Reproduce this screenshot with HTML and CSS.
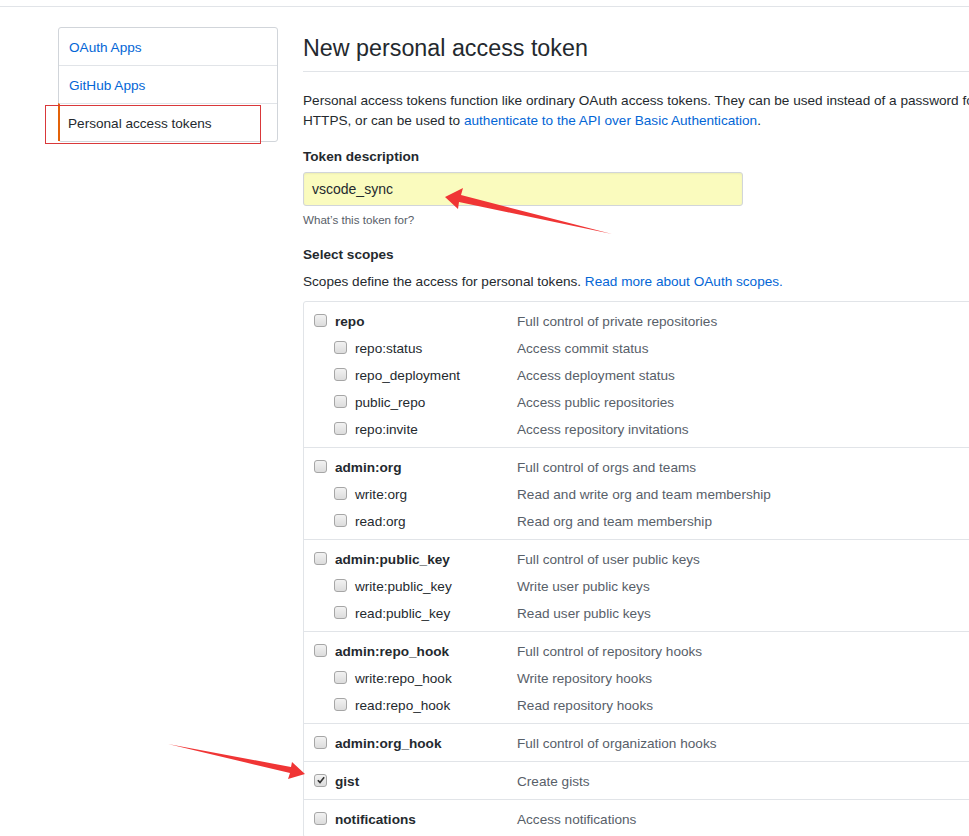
FILE: index.html
```html
<!DOCTYPE html>
<html>
<head>
<meta charset="utf-8">
<link rel="stylesheet" href="styles.css">
</head>
<body>
<div class="topline"></div>
<div class="page">
  <nav class="sidebar">
    <a class="side-item" href="#">OAuth Apps</a>
    <a class="side-item" href="#">GitHub Apps</a>
    <a class="side-item selected" href="#">Personal access tokens</a>
  </nav>
  <main class="main">
    <h1 class="title">New personal access token</h1>
    <p class="intro">Personal access tokens function like ordinary OAuth access tokens. They can be used instead of a password for Git over HTTPS, or can be used to <a href="#">authenticate to the API over Basic Authentication</a>.</p>
    <label class="label">Token description</label>
    <div class="input">vscode_sync</div>
    <p class="note">What’s this token for?</p>
    <h3 class="label scopes-title">Select scopes</h3>
    <p class="scopes-desc">Scopes define the access for personal tokens. <a href="#">Read more about OAuth scopes.</a></p>

    <div class="scopes">
      <div class="group">
        <div class="row parent"><span class="name"><span class="cb"></span>repo</span><span class="desc">Full control of private repositories</span></div>
        <div class="row child"><span class="name"><span class="cb"></span>repo:status</span><span class="desc">Access commit status</span></div>
        <div class="row child"><span class="name"><span class="cb"></span>repo_deployment</span><span class="desc">Access deployment status</span></div>
        <div class="row child"><span class="name"><span class="cb"></span>public_repo</span><span class="desc">Access public repositories</span></div>
        <div class="row child"><span class="name"><span class="cb"></span>repo:invite</span><span class="desc">Access repository invitations</span></div>
      </div>
      <div class="group">
        <div class="row parent"><span class="name"><span class="cb"></span>admin:org</span><span class="desc">Full control of orgs and teams</span></div>
        <div class="row child"><span class="name"><span class="cb"></span>write:org</span><span class="desc">Read and write org and team membership</span></div>
        <div class="row child"><span class="name"><span class="cb"></span>read:org</span><span class="desc">Read org and team membership</span></div>
      </div>
      <div class="group">
        <div class="row parent"><span class="name"><span class="cb"></span>admin:public_key</span><span class="desc">Full control of user public keys</span></div>
        <div class="row child"><span class="name"><span class="cb"></span>write:public_key</span><span class="desc">Write user public keys</span></div>
        <div class="row child"><span class="name"><span class="cb"></span>read:public_key</span><span class="desc">Read user public keys</span></div>
      </div>
      <div class="group">
        <div class="row parent"><span class="name"><span class="cb"></span>admin:repo_hook</span><span class="desc">Full control of repository hooks</span></div>
        <div class="row child"><span class="name"><span class="cb"></span>write:repo_hook</span><span class="desc">Write repository hooks</span></div>
        <div class="row child"><span class="name"><span class="cb"></span>read:repo_hook</span><span class="desc">Read repository hooks</span></div>
      </div>
      <div class="group">
        <div class="row parent"><span class="name"><span class="cb"></span>admin:org_hook</span><span class="desc">Full control of organization hooks</span></div>
      </div>
      <div class="group">
        <div class="row parent"><span class="name"><span class="cb checked"><svg viewBox="0 0 12 12" width="10" height="10"><path d="M2.2 6.3 L4.8 8.9 L9.8 2.8" fill="none" stroke="#333" stroke-width="2"/></svg></span>gist</span><span class="desc">Create gists</span></div>
      </div>
      <div class="group">
        <div class="row parent"><span class="name"><span class="cb"></span>notifications</span><span class="desc">Access notifications</span></div>
      </div>
    </div>
  </main>
</div>

<div class="mark-box"></div>
<svg class="arrows" width="969" height="836" viewBox="0 0 969 836">
  <polygon points="445,197 463,188 461,195 612,234 459,202 458,209" fill="#f03535"/>
  <polygon points="305,774 292,762 291,767 168,744 290,773 288,779" fill="#f03535"/>
</svg>
</body>
</html>
```
FILE: styles.css
```css
html, body {
  margin: 0;
  padding: 0;
  background: #fff;
  overflow: hidden;
}
body {
  width: 969px;
  height: 836px;
  position: relative;
  font-family: "Liberation Sans", Arial, sans-serif;
  font-size: 13.6px;
  line-height: 20px;
  color: #24292e;
}
a {
  color: #0366d6;
  text-decoration: none;
}
.topline {
  height: 6px;
  border-bottom: 1px solid #e1e4e8;
}
.page {
  display: flex;
  align-items: flex-start;
  padding-left: 58px;
  gap: 25px;
}
.sidebar {
  margin-top: 20px;
  width: 218px;
  flex: none;
  border: 1px solid #d1d5da;
  border-radius: 3px;
  display: flex;
  flex-direction: column;
}
.side-item {
  display: block;
  height: 37px;
  line-height: 39px;
  overflow: hidden;
  padding-left: 10px;
  white-space: nowrap;
  border-top: 1px solid #e1e4e8;
}
.side-item:first-child {
  border-top: none;
}
.side-item.selected {
  color: #24292e;
  border-left: 2px solid #e36209;
  padding-left: 8px;
  margin-left: -1px;
}
.main {
  width: 750px;
  flex: none;
}
.title {
  margin: 0;
  padding-top: 26px;
  padding-bottom: 8px;
  font-size: 23.3px;
  font-weight: normal;
  line-height: 30px;
  border-bottom: 1px solid #e1e4e8;
}
.intro {
  margin: 19px 0 0;
}
.label {
  display: block;
  margin: 16px 0 0;
  font-size: 13.6px;
  font-weight: bold;
  line-height: 20px;
}
.input {
  margin-top: 5px;
  width: 422px;
  height: 32px;
  line-height: 32px;
  padding: 0 8px;
  border: 1px solid #d1d5da;
  border-radius: 3px;
  background: #fafbbe;
  font-size: 14px;
  color: #24292e;
  box-shadow: inset 0 1px 2px rgba(27,31,35,0.06);
}
.note {
  margin: 5px 0 0;
  font-size: 11.6px;
  line-height: 18px;
  color: #586069;
}
.scopes-title {
  margin-top: 16px;
}
.scopes-desc {
  margin: 7px 0 0;
}
.scopes {
  margin-top: 9px;
  border: 1px solid #e1e4e8;
  border-radius: 3px;
}
.group {
  padding: 6px 0 4px;
  border-top: 1px solid #e1e4e8;
}
.group:first-child {
  border-top: none;
}
.row {
  display: grid;
  grid-template-columns: 213px 1fr;
  height: 27px;
  line-height: 27px;
}
.name {
  display: flex;
  align-items: center;
  padding-left: 10px;
}
.child .name {
  padding-left: 30px;
}
.parent .name {
  font-weight: bold;
}
.desc {
  color: #586069;
}
.cb {
  width: 11px;
  height: 11px;
  margin-right: 8px;
  margin-top: -3px;
  border: 1px solid #a6a6a6;
  border-radius: 3px;
  background: linear-gradient(#f2f2f2, #dcdcdc);
  display: flex;
  align-items: center;
  justify-content: center;
  flex: none;
}
.mark-box {
  position: absolute;
  left: 45px;
  top: 105px;
  width: 214px;
  height: 37px;
  border: 1px solid #d9383a;
}
.arrows {
  position: absolute;
  left: 0;
  top: 0;
  pointer-events: none;
}
```
